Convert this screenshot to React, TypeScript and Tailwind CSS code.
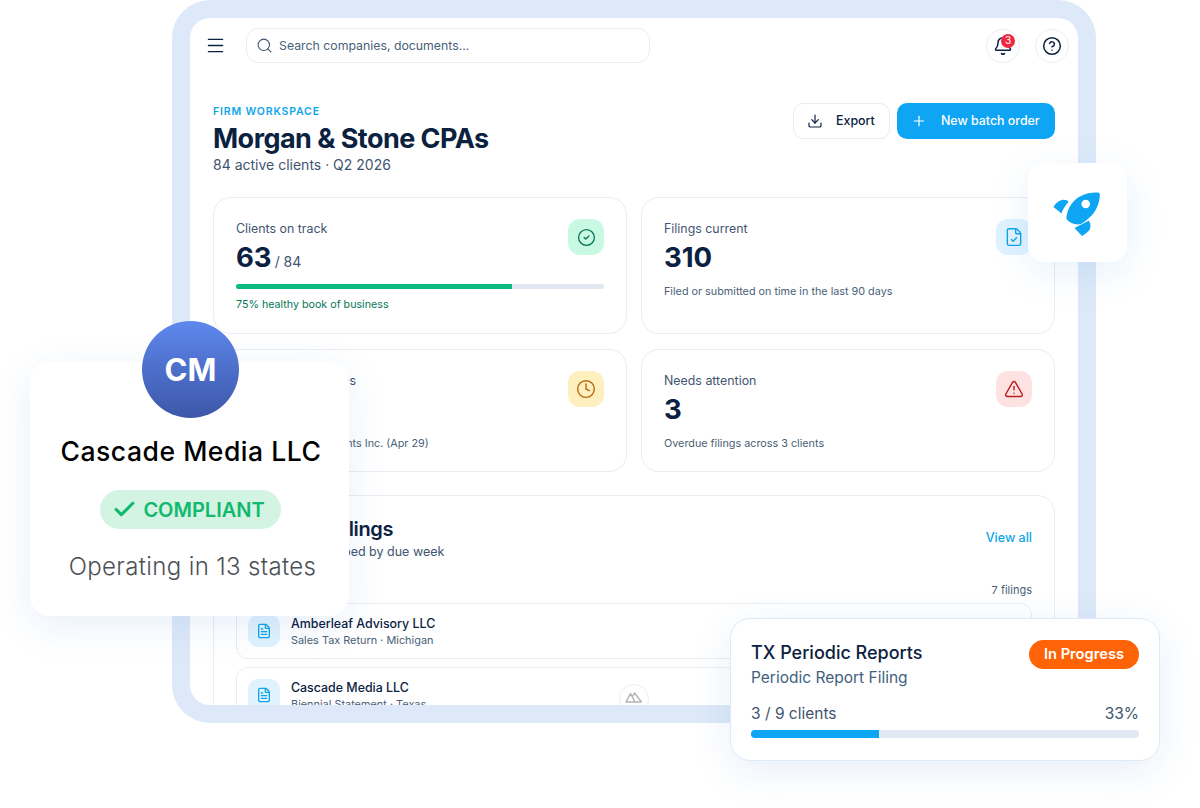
import React from 'react';
import {
    AlertTriangle,
    Bell,
    Check,
    CircleCheck,
    CircleHelp,
    Clock,
    Download,
    FileCheck,
    FileText,
    Menu,
    Plus,
    Search,
} from 'lucide-react';

const Rocket = () => (
    <svg width="47" height="45" viewBox="13 11 47 45" fill="#0ea5f4">
        <path
            fillRule="evenodd"
            d="M57.500 12.600C59 12.400 59.800 13.200 59.800 15C60 22 56 32 50 37C47 40 44 42 41 44C36 45.500 29 43 26.300 38.500C27 32 29 26 34 21C40 15 49 12 57.500 12.600ZM45.700 19.700a4.300 4.300 0 1 0 0 8.600a4.300 4.300 0 0 0 0-8.600Z"
        />
        <path d="M13.500 27C15 24 18 21 22 20C25 19.500 28 20.500 28.500 22C25 26 23 29 21.500 33.500Z" />
        <path d="M34.500 48L49 40.500C51 45 51 48 49 50.500C46.500 53 44.500 54.500 42 56Z" />
    </svg>
);

const MountainMark = () => (
    <svg width="18" height="12" viewBox="0 0 18 12" fill="none" stroke="#b4b4b4" strokeWidth="1.500" strokeLinejoin="round">
        <path d="M1 11 5.500 2.500 10 11H1Z" />
        <path d="M7.500 5.500 9.500 2l7 9H10" />
    </svg>
);

type StatCardProps = {
    label: string;
    value: string;
    suffix?: string;
    note?: string;
    icon: React.ReactNode;
    iconBg: string;
    children?: React.ReactNode;
};

const StatCard: React.FC<StatCardProps> = ({ label, value, suffix, note, icon, iconBg, children }) => (
    <div className="relative flex-1 min-w-0 rounded-[18px] border border-[#e8edf3] bg-white pl-[22px] pr-[22px] pt-[22px]">
        <div className={`absolute right-[22px] top-[21px] flex h-[36px] w-[36px] items-center justify-center rounded-[12px] ${iconBg}`}>
            {icon}
        </div>
        <div className="text-[12.4px] leading-[18px] text-[#3f5570]">{label}</div>
        <div className="mt-[2px] flex items-baseline leading-[34px]">
            <span className="text-[27.5px] font-bold text-[#0b2140]">{value}</span>
            {suffix && <span className="ml-[3px] text-[14px] text-[#3f5570]">{suffix}</span>}
        </div>
        {children}
        {note && <div className="mt-[10px] text-[10.8px] leading-[16px] text-[#4a5f78]">{note}</div>}
    </div>
);

const FilingRow: React.FC<{ name: string; detail: string }> = ({ name, detail }) => (
    <div className="flex h-[56px] shrink-0 items-center gap-[11px] rounded-[12px] border border-[#e8edf3] bg-white pl-[11px]">
        <div className="flex h-[32px] w-[32px] items-center justify-center rounded-[10px] bg-[#e0f2fe]">
            <FileText size={16} strokeWidth={2} className="text-[#0ea5e9]" />
        </div>
        <div className="pt-[1px]">
            <div className="text-[12.4px] font-medium leading-[17px] text-[#0b2140]">{name}</div>
            <div className="mt-[1px] text-[10.9px] leading-[15px] text-[#4a6078]">{detail}</div>
        </div>
    </div>
);

export default function App() {
    return (
        <div className="relative h-[808px] w-[1200px] overflow-hidden bg-white font-['Inter',sans-serif]">
            {/* Tablet frame */}
            <div className="ml-[172px] h-[723px] w-[924px] rounded-[38px] bg-[#dde9f8] p-[18px]">
                <div className="h-full overflow-hidden rounded-[20px] bg-white">
                    {/* Top bar */}
                    <div className="flex h-[55px] items-center pl-[15px] pr-[9px]">
                        <Menu size={21} strokeWidth={1.700} className="text-[#0b2140]" />
                        <div className="ml-[20px] flex h-[35px] w-[404px] items-center gap-[6px] rounded-[12px] border border-[#e8edf3] pl-[9px]">
                            <Search size={17} strokeWidth={1.500} className="text-[#3f5570]" />
                            <span className="pt-[1px] text-[12.3px] text-[#4a5f78]">Search companies, documents...</span>
                        </div>
                        <div className="ml-auto flex items-center gap-[15px]">
                            <div className="relative flex h-[34px] w-[34px] items-center justify-center rounded-full border border-[#e8edf3]">
                                <Bell size={20} strokeWidth={1.800} className="text-[#0b2140]" />
                                <span className="absolute left-[14px] top-[4px] flex h-[14px] w-[14px] items-center justify-center rounded-full bg-[#f0293e] text-[10px] text-white">3</span>
                            </div>
                            <div className="flex h-[34px] w-[34px] items-center justify-center rounded-full border border-[#e8edf3]">
                                <CircleHelp size={20} strokeWidth={1.800} className="text-[#0b2140]" />
                            </div>
                        </div>
                    </div>

                    <div className="px-[23px]">
                        {/* Page heading */}
                        <div className="mt-[30px] flex h-[71px] items-start justify-between">
                            <div className="pt-[2px]">
                                <div className="text-[10.5px] font-semibold leading-[14px] tracking-[0.08em] text-[#0ea5e9]">FIRM WORKSPACE</div>
                                <div className="mt-[3px] text-[27px] font-bold leading-[34px] tracking-[-0.02em] text-[#0b2140]">Morgan &amp; Stone CPAs</div>
                                <div className="mt-[-1px] text-[14px] leading-[20px] text-[#3f5570]">84 active clients · Q2 2026</div>
                            </div>
                            <div className="flex gap-[7px]">
                                <div className="flex h-[36px] w-[97px] items-center gap-[13px] rounded-[10px] border border-[#e8edf3] pl-[13px] text-[12.400px] font-medium text-[#0b2140]">
                                    <Download size={16} strokeWidth={1.800} />
                                    Export
                                </div>
                                <div className="flex h-[36px] w-[158px] items-center gap-[14px] rounded-[10px] bg-[#0ea5f4] pl-[14px] text-[12.400px] font-medium text-white">
                                    <Plus size={16} strokeWidth={1.800} />
                                    New batch order
                                </div>
                            </div>
                        </div>

                        {/* Stat cards */}
                        <div className="mt-[23px] flex h-[137px] gap-[14px]">
                            <StatCard
                                label="Clients on track"
                                value="63"
                                suffix="/ 84"
                                iconBg="bg-[#c9f9e3]"
                                icon={<CircleCheck size={19} strokeWidth={1.700} className="text-[#047857]" />}
                            >
                                <div className="mt-[5px] h-[5px] overflow-hidden rounded-full bg-[#e2e8f2]">
                                    <div className="h-full w-[75%] bg-[#10b981]" />
                                </div>
                                <div className="mt-[8px] text-[10.7px] leading-[16px] text-[#047857]">75% healthy book of business</div>
                            </StatCard>
                            <StatCard
                                label="Filings current"
                                value="310"
                                note="Filed or submitted on time in the last 90 days"
                                iconBg="bg-[#e0f2fe]"
                                icon={<FileCheck size={20} strokeWidth={1.700} className="text-[#0ea5e9]" />}
                            />
                        </div>
                        <div className="mt-[15px] flex h-[123px] gap-[14px]">
                            <StatCard
                                label="Upcoming deadlines"
                                value="5"
                                note="Next: Meridian Accounts Inc. (Apr 29)"
                                iconBg="bg-[#feefbe]"
                                icon={<Clock size={20} strokeWidth={1.700} className="text-[#b8690f]" />}
                            />
                            <StatCard
                                label="Needs attention"
                                value="3"
                                note="Overdue filings across 3 clients"
                                iconBg="bg-[#fee2e2]"
                                icon={<AlertTriangle size={20} strokeWidth={1.700} className="text-[#b91c1c]" />}
                            />
                        </div>

                        {/* Upcoming filings */}
                        <div className="mt-[23px] h-[300px] rounded-[18px] border border-[#e8edf3] px-[22px] pt-[20px]">
                            <div className="flex items-center justify-between">
                                <div>
                                    <div className="text-[20px] font-semibold leading-[26px] tracking-[-0.02em] text-[#0b2140]">Upcoming filings</div>
                                    <div className="mt-[1px] text-[12.5px] leading-[18px] text-[#3f5570]">Client filings, grouped by due week</div>
                                </div>
                                <span className="text-[12.5px] font-medium text-[#0ea5e9]">View all</span>
                            </div>
                            <div className="mt-[21px] text-right text-[11px] leading-[16px] text-[#4a5f78]">7 filings</div>
                            <div className="mt-[5px] flex flex-col gap-[8px]">
                                <FilingRow name="Amberleaf Advisory LLC" detail="Sales Tax Return · Michigan" />
                                <FilingRow name="Cascade Media LLC" detail="Biennial Statement · Texas" />
                            </div>
                        </div>
                    </div>
                </div>
            </div>

            {/* Mark clipped by the frame */}
            <div className="absolute left-[619px] top-[684px] h-[21px] w-[30px] overflow-hidden">
                <div className="flex h-[30px] w-[30px] items-center justify-center rounded-full border border-[#eceef1] bg-white pb-[4px]">
                    <MountainMark />
                </div>
            </div>

            {/* Rocket tile */}
            <div className="absolute left-[1028px] top-[163px] flex h-[99px] w-[99px] items-center justify-center rounded-[16px] bg-white pr-[2px] pt-[2px] shadow-[0_10px_40px_rgba(14,120,220,0.10)]">
                <Rocket />
            </div>

            {/* Company card */}
            <div className="absolute left-[30px] top-[362px] flex h-[254px] w-[319px] flex-col items-center rounded-[20px] bg-white pl-[3px] pt-[71px] shadow-[0_10px_40px_rgba(30,100,200,0.10)]">
                <div className="text-[26.500px] font-medium leading-[36px] tracking-[0.02em] text-black">Cascade Media LLC</div>
                <div className="ml-[-2px] mt-[21px] flex h-[39px] w-[181px] items-center justify-center gap-[6px] rounded-full bg-[#d3f3e3] pr-[3px] text-[20px] font-semibold text-[#10b96d]">
                    <Check size={25} strokeWidth={3} />
                    COMPLIANT
                </div>
                <div className="ml-[3px] mt-[21px] text-[24px] font-light leading-[34px] tracking-[0.015em] text-[#4b4f55]">Operating in 13 states</div>
            </div>
            <div className="absolute left-[142px] top-[321px] flex h-[97px] w-[97px] items-center justify-center rounded-full bg-gradient-to-b from-[#5f88ee] to-[#3c57a8] pt-[2px] text-[31px] font-bold text-white">
                CM
            </div>

            {/* Order progress card */}
            <div className="absolute left-[730px] top-[618px] h-[143px] w-[430px] rounded-[20px] border border-[#dde9f8] bg-white px-[20px] pt-[21px] shadow-[0_10px_40px_rgba(30,100,200,0.10)]">
                <div className="flex items-start justify-between">
                    <div className="pt-[1px]">
                        <div className="text-[18px] font-medium leading-[24px] text-[#0b2140]">TX Periodic Reports</div>
                        <div className="mt-[2px] text-[15.500px] leading-[22px] text-[#3f5f80]">Periodic Report Filing</div>
                    </div>
                    <div className="flex h-[29px] w-[110px] items-center justify-center rounded-full bg-[#ff6308] pb-[1px] text-[14.700px] font-semibold text-white">In Progress</div>
                </div>
                <div className="mt-[14px] flex justify-between text-[15.500px] leading-[22px] text-[#3f5570]">
                    <span>3 / 9 clients</span>
                    <span>33%</span>
                </div>
                <div className="mt-[5px] h-[8px] overflow-hidden rounded-full bg-[#e2e8f2]">
                    <div className="h-full w-[33%] bg-[#0ea5f4]" />
                </div>
            </div>
        </div>
    );
}
